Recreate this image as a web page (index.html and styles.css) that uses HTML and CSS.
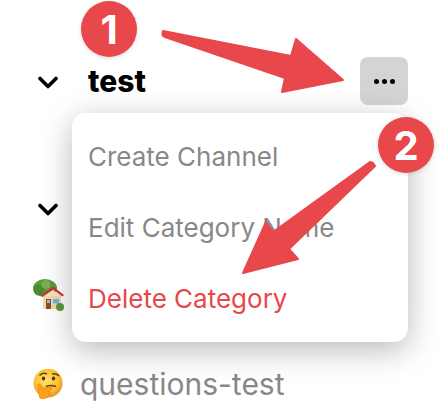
FILE: index.html
```html
<!DOCTYPE html>
<html lang="en">
<head>
  <meta charset="UTF-8">
  <title>Category menu</title>
  <link rel="stylesheet" href="styles.css">
</head>
<body>
  <div class="page">
    <div class="sidebar">
      <div class="row row-category">
        <svg class="chevron" viewBox="0 0 20 13"><path d="M2 2.5 L10 10.5 L18 2.5"/></svg>
        <span class="category-name">test</span>
        <button class="more-btn">
          <span class="dot"></span><span class="dot"></span><span class="dot"></span>
        </button>
      </div>
      <div class="row row-second">
        <svg class="chevron" viewBox="0 0 20 13"><path d="M2 2.5 L10 10.5 L18 2.5"/></svg>
      </div>
      <div class="row row-house">
        <!-- house with tree -->
        <svg class="emoji" viewBox="0 0 32 32">
          <ellipse cx="13" cy="9" rx="12" ry="9" fill="#5c9a3c"/>
          <circle cx="7" cy="11" r="5.5" fill="#4c8a32"/>
          <circle cx="14" cy="5.5" r="4.5" fill="#78b04f"/>
          <rect x="11" y="16" width="18" height="14" fill="#f3d9a8"/>
          <path d="M21 11 L11 17 L29 17 Z" fill="#f6e3bd"/>
          <path d="M9 16.5 L21 7.5 L32 16 L30.5 17.5 L21 10.5 L10.5 18 Z" fill="#c9353a"/>
          <rect x="14" y="20" width="5" height="10" fill="#8a4f2c"/>
          <rect x="15" y="21" width="3" height="3" fill="#7cc0ea"/>
          <rect x="21" y="20" width="6" height="4.5" fill="#6cb4e6"/>
          <circle cx="28" cy="28" r="4" fill="#5a9a3e"/>
        </svg>
      </div>
      <div class="row row-channel">
        <!-- thinking face -->
        <svg class="emoji emoji-think" viewBox="0 0 30 30">
          <defs>
            <radialGradient id="face" cx="45%" cy="40%" r="60%">
              <stop offset="0" stop-color="#fde26a"/>
              <stop offset="0.7" stop-color="#fbc02d"/>
              <stop offset="1" stop-color="#f28f1e"/>
            </radialGradient>
          </defs>
          <circle cx="15" cy="14" r="14.5" fill="url(#face)"/>
          <path d="M6.5 6.5 Q10 3 14 5" fill="none" stroke="#6b3d12" stroke-width="1.5"/>
          <path d="M19 5 Q23 4 26 7" fill="none" stroke="#6b3d12" stroke-width="1.5"/>
          <ellipse cx="10.5" cy="9.5" rx="1.7" ry="2.1" fill="#5a3310"/>
          <ellipse cx="20.5" cy="9.5" rx="1.7" ry="2.1" fill="#5a3310"/>
          <path d="M13 17.5 Q18 15.5 23 17.5" fill="none" stroke="#6b3d12" stroke-width="1.5"/>
          <path d="M5 16 Q5 14 7 15 L10 19 L17 17.5 Q20 18 19 20 L15 21.5 Q18 22.5 17 25 Q16 29 10 30 Q6 30 6 26 Z" fill="#f7a21f" stroke="#e07f10" stroke-width="0.6"/>
        </svg>
        <span class="channel-name">questions-test</span>
      </div>
    </div>

    <div class="menu">
      <div class="menu-item">Create Channel</div>
      <div class="menu-item">Edit Category Name</div>
      <div class="menu-item menu-item-danger">Delete Category</div>
    </div>

    <svg class="arrows" viewBox="0 0 442 412">
      <path class="arrow" d="M163 31 Q161 36 165 37 L285 78 L282 92 L343 80 L296 39 L291 56 Z"/>
      <path class="arrow" d="M373 163 L370 162 L273 232 L266 222 L243 273 L298 259 L289 249 L375 166 Z"/>
    </svg>
    <div class="step step-one">1</div>
    <div class="step step-two">2</div>
  </div>
</body>
</html>
```

FILE: styles.css
```css
html, body {
  margin: 0;
  padding: 0;
  background: #fff;
}
.page {
  position: relative;
  width: 442px;
  height: 412px;
  overflow: hidden;
  font-family: Inter, "Liberation Sans", sans-serif;
}
.sidebar {
  padding: 57px 34px 0 32px;
}
.row {
  display: flex;
  align-items: center;
  height: 48px;
}
.row-second {
  margin-top: 79px;
}
.row-house {
  margin-top: 39px;
}
.row-channel {
  margin-top: 41px;
}
.chevron {
  width: 20px;
  height: 13px;
  margin-left: 6px;
  margin-top: 2px;
  fill: none;
  stroke: #000;
  stroke-width: 3.6;
  stroke-linecap: round;
  stroke-linejoin: round;
}
.category-name {
  margin-left: 30px;
  font-size: 30px;
  font-weight: 800;
  color: #000;
}
.more-btn {
  display: flex;
  align-items: center;
  justify-content: center;
  gap: 3px;
  width: 48px;
  height: 48px;
  margin-left: auto;
  padding: 0;
  border: none;
  border-radius: 8px;
  background: #d4d4d4;
}
.dot {
  width: 5px;
  height: 5px;
  border-radius: 50%;
  background: #000;
}
.emoji {
  width: 32px;
  height: 32px;
}
.emoji-think {
  width: 30px;
  height: 30px;
  margin-left: 1px;
}
.channel-name {
  margin-left: 17px;
  font-size: 30px;
  color: #888;
}
.menu {
  position: absolute;
  left: 72px;
  top: 113px;
  width: 336px;
  box-sizing: border-box;
  padding: 8px 16px;
  border-radius: 14px;
  background: #fff;
  box-shadow: 0 8px 32px rgba(0, 0, 0, 0.28);
}
.menu-item {
  display: flex;
  align-items: center;
  height: 71px;
  font-size: 26px;
  color: #888;
}
.menu-item-danger {
  color: #e8474b;
}
.arrows {
  position: absolute;
  left: 0;
  top: 0;
  width: 442px;
  height: 412px;
}
.arrow {
  fill: #e8474b;
  stroke: #e8474b;
  stroke-width: 2;
  stroke-linejoin: round;
}
.step {
  position: absolute;
  display: flex;
  align-items: center;
  justify-content: center;
  width: 56px;
  height: 56px;
  border-radius: 50%;
  background: #e8474b;
  color: #fff;
  font-size: 40px;
  font-weight: 700;
  box-shadow: 0 1px 4px rgba(0, 0, 0, 0.15);
}
.step-one {
  left: 81px;
  top: 1px;
}
.step-two {
  left: 378px;
  top: 117px;
}
```
